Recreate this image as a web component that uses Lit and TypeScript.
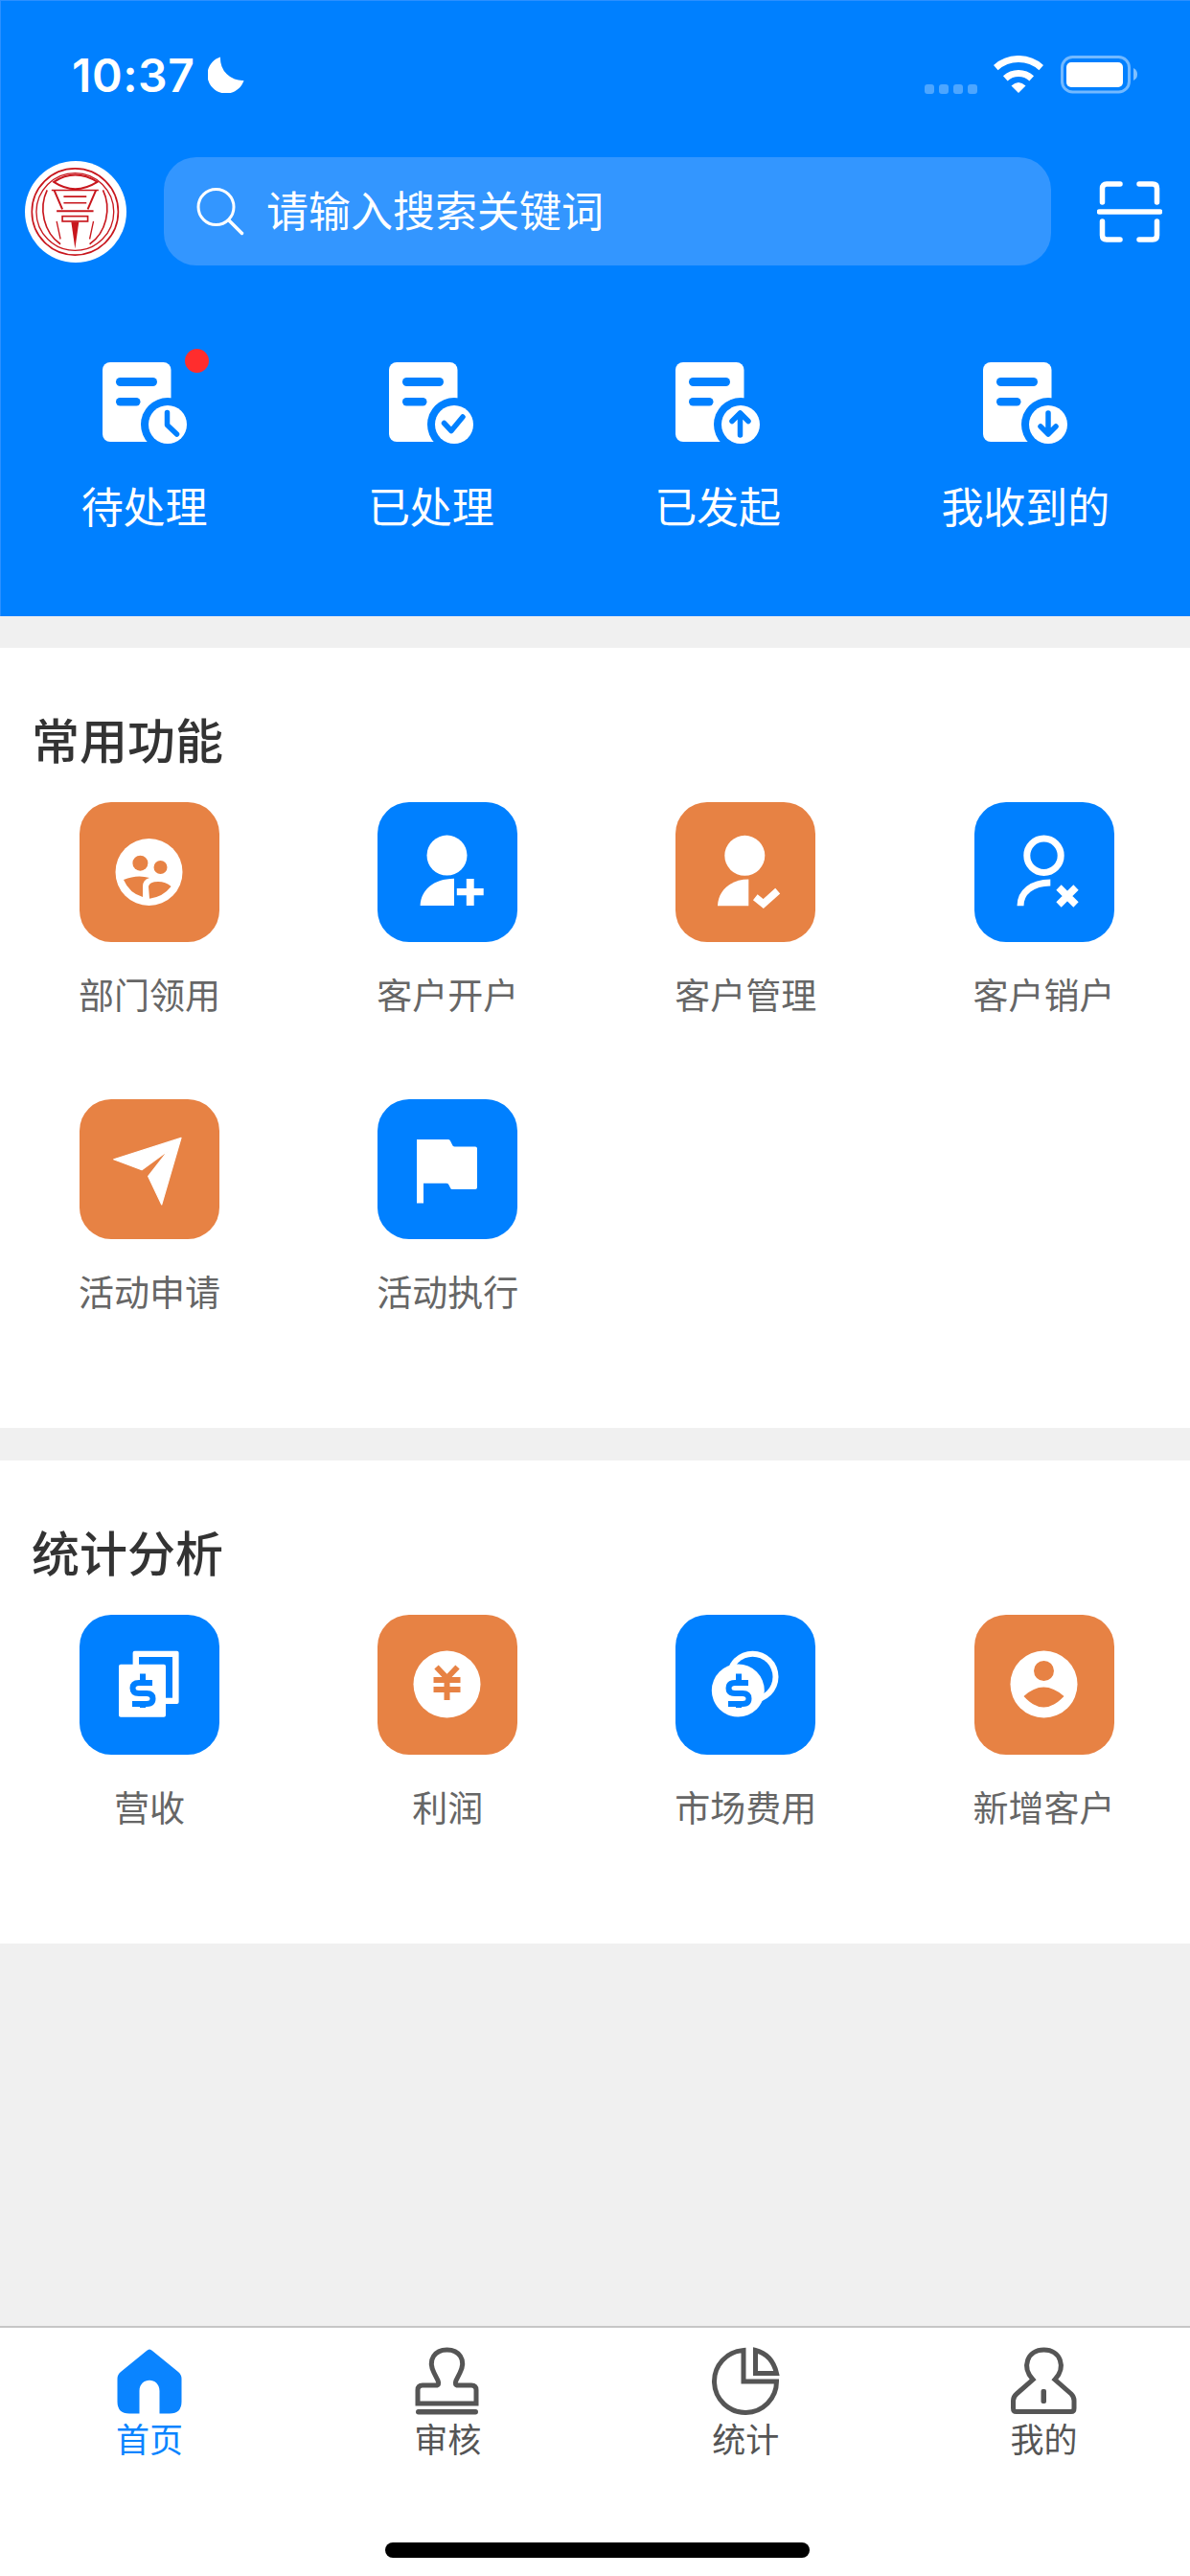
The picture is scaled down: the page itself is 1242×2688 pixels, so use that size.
import {LitElement, css, html, svg} from 'lit';
import {customElement} from 'lit/decorators.js';

const dollar = (dx: number) => svg`
  <path d="M${dx + 76} 71 H${dx + 62} Q${dx + 55.5} 71 ${dx + 55.5} 76.5 Q${dx + 55.5} 82 ${dx + 62} 82 H${dx + 70} Q${dx + 76.5} 82 ${dx + 76.5} 87.5 Q${dx + 76.5} 93 ${dx + 70} 93 H${dx + 55}" fill="none" stroke="#0080ff" stroke-width="6"/>
  <path d="M${dx + 66} 61.5 V70 M${dx + 66} 92 V97" fill="none" stroke="#0080ff" stroke-width="6"/>`;

const tileIcons: Record<string, unknown> = {
  dept: svg`
    <circle cx="72.5" cy="73" r="35" fill="#fff"/>
    <circle cx="63.4" cy="63.7" r="8" fill="#e78244"/>
    <circle cx="84.5" cy="68" r="7" fill="#e78244"/>
    <path d="M46 81 Q60 75 73 79 Q66 81 66 88 V99 Q52 95 46 81Z M72 88 Q73 83 82 83 Q90 83 95.6 88 Q87 99 73 100.7Z" fill="#e78244"/>`,
  open: svg`
    <circle cx="72.5" cy="55.6" r="21" fill="#fff"/>
    <path d="M44.6 108 C45 92 58 80 80 79.7 V108Z" fill="#fff"/>
    <path d="M82.8 90 H92.8 V80 H100.7 V90 H110.7 V97.3 H100.7 V108 H92.8 V97.3 H82.8Z" fill="#fff"/>`,
  manage: svg`
    <circle cx="72.3" cy="55.8" r="21" fill="#fff"/>
    <path d="M44 108.3 C44.5 92 58 80.6 76.3 80.6 V108.3Z" fill="#fff"/>
    <path d="M83.3 99.3 L91.7 106 L106.7 92.6" fill="none" stroke="#fff" stroke-width="7.5"/>`,
  cancel: svg`
    <circle cx="72.5" cy="55.8" r="17.7" fill="none" stroke="#fff" stroke-width="7"/>
    <path d="M48 108.3 C48 94 60 84 79.3 84" fill="none" stroke="#fff" stroke-width="7"/>
    <path d="M88 89 L106 107 M106 89 L88 107" fill="none" stroke="#fff" stroke-width="7.5"/>`,
  plane: svg`
    <path d="M106 40.4 L35.7 62.7 L65 73.7 L92.7 53.4 L71.7 80.4 L85.7 110Z" fill="#fff" stroke="#fff" stroke-width="1.2" stroke-linejoin="round"/>`,
  flag: svg`
    <path d="M41 42 H74 Q75.5 42 76 43.5 L78 47.5 Q78.5 49.4 80.5 49.4 H102 Q104 49.4 104 51.5 V92 Q104 94 102 94 H78 Q76.5 94 76 92.5 L74.5 89.5 Q74 87.7 72 87.7 H48 V108.4 H41Z" fill="#fff"/>`,
  revenue: svg`
    <rect x="55.6" y="37.7" width="48" height="55.3" rx="2" fill="#fff"/>
    <rect x="62" y="44" width="35" height="42.7" fill="#0080ff"/>
    <rect x="41" y="51.7" width="49" height="55" rx="2" fill="#fff"/>
    ${dollar(0)}`,
  profit: svg`
    <circle cx="72.5" cy="72.5" r="35" fill="#fff"/>
    <path d="M61.5 54.5 L72.5 66 L83.5 54.5 M58.5 68 H86.5 M58.5 78 H86.5 M72.5 66 V89" fill="none" stroke="#e78244" stroke-width="6"/>`,
  coins: svg`
    <circle cx="80.5" cy="64.7" r="27" fill="#fff"/>
    <circle cx="80.5" cy="64.7" r="21" fill="#0080ff"/>
    <circle cx="65.3" cy="79" r="27.5" fill="#fff"/>
    ${dollar(0)}`,
  customer: svg`
    <circle cx="72.5" cy="72.5" r="35" fill="#fff"/>
    <circle cx="72.5" cy="58.5" r="10.5" fill="#e78244"/>
    <path d="M51.5 85 Q72 66 93.5 85 Q72 108 51.5 85Z" fill="#e78244"/>`,
};

const tile = (name: string, color: string) => html`
  <div class="tile ${color}">
    <svg viewBox="0 0 146 146" width="146" height="146">${tileIcons[name]}</svg>
  </div>`;

const badges: Record<string, unknown> = {
  clock: svg`<path d="M67.5 52.5 V65.5 L77.5 75" fill="none" stroke="#0080ff" stroke-width="5.5" stroke-linecap="round" stroke-linejoin="round"/>`,
  check: svg`<path d="M57.5 63.5 L65 71.5 L77 57" fill="none" stroke="#0080ff" stroke-width="5.5" stroke-linecap="round" stroke-linejoin="round"/>`,
  up: svg`<path d="M67.5 76 V53 M59 61.5 L67.5 53 L76 61.5" fill="none" stroke="#0080ff" stroke-width="5.5" stroke-linecap="round" stroke-linejoin="round"/>`,
  down: svg`<path d="M68 53 V75 M60 67 L68 75 L76 67" fill="none" stroke="#0080ff" stroke-width="5.5" stroke-linecap="round" stroke-linejoin="round"/>`,
};

const docIcon = (badge: string) => html`
  <svg viewBox="0 0 88 85" width="88" height="85">
    <rect x="0" y="0" width="71.5" height="83" rx="8" fill="#fff"/>
    <rect x="14" y="16" width="43" height="9" rx="4.5" fill="#0080ff"/>
    <rect x="14" y="37" width="25.5" height="8.5" rx="4.2" fill="#0080ff"/>
    <circle cx="68" cy="65" r="28" fill="#0080ff"/>
    <path d="M40 85 H88 V83 H40Z" fill="#0080ff"/>
    <circle cx="68" cy="65" r="20" fill="#fff"/>
    ${badges[badge]}
  </svg>`;

const shortcuts = [
  {label: '待处理', badge: 'clock', dot: true},
  {label: '已处理', badge: 'check', dot: false},
  {label: '已发起', badge: 'up', dot: false},
  {label: '我收到的', badge: 'down', dot: false},
];

const common = [
  {label: '部门领用', icon: 'dept', color: 'orange'},
  {label: '客户开户', icon: 'open', color: 'blue'},
  {label: '客户管理', icon: 'manage', color: 'orange'},
  {label: '客户销户', icon: 'cancel', color: 'blue'},
  {label: '活动申请', icon: 'plane', color: 'orange'},
  {label: '活动执行', icon: 'flag', color: 'blue'},
];

const stats = [
  {label: '营收', icon: 'revenue', color: 'blue'},
  {label: '利润', icon: 'profit', color: 'orange'},
  {label: '市场费用', icon: 'coins', color: 'blue'},
  {label: '新增客户', icon: 'customer', color: 'orange'},
];

const tabs = [
  {
    label: '首页',
    active: true,
    icon: html`<svg viewBox="0 0 72 72" width="72" height="72">
      <path d="M36 3.5 Q37.5 3.5 39 5 L66 27 Q69.5 30 69.5 34 V58 Q69.5 70.5 57 70.5 H46.5 V47 C46.5 32 25.5 32 25.5 47 V70.5 H15 Q2.5 70.5 2.5 58 V34 Q2.5 30 6 27 L33 5 Q34.5 3.5 36 3.5Z" fill="#0a84ff"/>
    </svg>`,
  },
  {
    label: '审核',
    active: false,
    icon: html`<svg viewBox="0 0 70 72" width="70" height="72">
      <path d="M4 60 V46 Q4 41 9 41 H23 Q27 41 25 36 L21 28 C14 14 22 4 34.5 4 C47 4 55 14 48 28 L44 36 Q42 41 46 41 H60 Q65 41 65 46 V60Z" fill="none" stroke="#555" stroke-width="5"/>
      <rect x="2" y="66" width="65" height="5.5" rx="2.7" fill="#555"/>
    </svg>`,
  },
  {
    label: '统计',
    active: false,
    icon: html`<svg viewBox="0 0 74 72" width="74" height="72">
      <path d="M35 4.5 A32.5 32.5 0 1 0 69.5 37 H35Z" fill="none" stroke="#555" stroke-width="5"/>
      <path d="M47.5 4.5 Q65 9 69.5 28.5 H47.5Z" fill="none" stroke="#555" stroke-width="5"/>
    </svg>`,
  },
  {
    label: '我的',
    active: false,
    icon: html`<svg viewBox="0 0 72 72" width="72" height="72">
      <path d="M24 35 C12 22 18 4 35.5 4 C53 4 59 22 47 35 L64 50 Q67 53 67 57 V65 Q67 68.5 64 68.5 H6.5 Q3.5 68.5 3.5 65 V57 Q3.5 53 7 50Z" fill="none" stroke="#555" stroke-width="5"/>
      <rect x="32.5" y="45" width="5.5" height="15" rx="2" fill="#555"/>
    </svg>`,
  },
];

@customElement('app-root')
export class AppRoot extends LitElement {
  static styles = css`
    :host {
      display: flex;
      flex-direction: column;
      width: 1242px;
      min-height: 2688px;
      background: #f0f0f0;
      font-family: 'Noto Sans CJK SC', 'Liberation Sans', sans-serif;
    }

    .header {
      height: 643px;
      box-sizing: border-box;
      background: #0080ff;
      border-top: 1px solid #2b8fff;
      border-left: 1px solid #2b8fff;
      color: #fff;
    }

    .status {
      display: flex;
      justify-content: space-between;
      align-items: center;
      height: 40px;
      margin: 57px 55px 0 74px;
    }
    .status-left, .status-right {
      display: flex;
      align-items: center;
    }
    .time {
      margin-top: 2px;
      font-family: Inter, 'Liberation Sans', sans-serif;
      font-weight: 600;
      font-size: 48px;
      line-height: 40px;
      letter-spacing: 0.6px;
    }
    .moon {
      margin-left: 14px;
    }
    .dots {
      display: flex;
      gap: 5px;
      align-self: flex-end;
      margin-right: 17px;
    }
    .dots span {
      width: 10px;
      height: 10px;
      border-radius: 3px;
      background: rgba(255, 255, 255, 0.3);
    }
    .wifi {
      margin-right: 18px;
    }

    .search-row {
      display: flex;
      align-items: center;
      height: 113px;
      margin-top: 66px;
      padding-left: 25px;
    }
    .logo {
      flex: none;
    }
    .search {
      flex: none;
      display: flex;
      align-items: center;
      width: 926px;
      height: 113px;
      box-sizing: border-box;
      margin-left: 39px;
      padding-left: 34px;
      border-radius: 34px;
      background: #3396ff;
    }
    .search-text {
      margin: 0 0 6px 23px;
      font-size: 44px;
      line-height: 60px;
    }
    .scan {
      margin-left: 48px;
    }

    .shortcuts {
      display: flex;
      justify-content: space-around;
      margin-top: 101px;
    }
    .shortcut {
      display: flex;
      flex-direction: column;
      align-items: center;
    }
    .shortcut-icon {
      position: relative;
      width: 88px;
      height: 85px;
    }
    .dot {
      position: absolute;
      left: 86px;
      top: -14px;
      width: 25px;
      height: 25px;
      border-radius: 50%;
      background: #ff2d2d;
    }
    .shortcut-label {
      margin-top: 34px;
      font-size: 44px;
      line-height: 60px;
    }

    .section {
      margin-top: 33px;
      padding: 59px 0 123px;
      background: #fff;
    }
    .section + .section {
      margin-top: 34px;
    }
    .title {
      margin: 0 0 32px 33px;
      font-size: 50px;
      font-weight: 500;
      line-height: 70px;
      color: #333;
    }
    .grid {
      display: grid;
      grid-template-columns: repeat(4, 311.2px);
      row-gap: 91px;
      margin-bottom: 1px;
      padding-left: 0.4px;
    }
    .cell {
      display: flex;
      flex-direction: column;
      align-items: center;
    }
    .tile {
      width: 146px;
      height: 146px;
      border-radius: 33px;
    }
    .tile svg {
      display: block;
    }
    .tile.orange {
      background: #e78244;
    }
    .tile.blue {
      background: #0080ff;
    }
    .cell-label {
      margin-top: 35px;
      font-size: 37px;
      line-height: 38px;
      color: #666;
    }

    .spacer {
      flex: 1;
    }

    .tabbar {
      display: flex;
      flex-direction: column;
      height: 261px;
      box-sizing: border-box;
      border-top: 2px solid #c6c6c6;
      background: #fff;
    }
    .tabs {
      display: grid;
      grid-template-columns: repeat(4, 311.2px);
      padding: 19px 0 0 0.4px;
    }
    .tab {
      display: flex;
      flex-direction: column;
      align-items: center;
      color: #555;
    }
    .tab.active {
      color: #0a84ff;
    }
    .tab svg {
      display: block;
    }
    .tab-label {
      margin-top: 1px;
      font-size: 35px;
      line-height: 46px;
    }
    .home-indicator {
      width: 443px;
      height: 16px;
      margin: auto 0 19px 402px;
      border-radius: 8px;
      background: #000;
    }
  `;

  private renderStatus() {
    return html`
      <div class="status">
        <div class="status-left">
          <span class="time">10:37</span>
          <svg class="moon" viewBox="0 0 38 38" width="38" height="38">
            <path d="M13 .5 A19.5 19.5 0 1 0 37.5 25 A23 23 0 0 1 13 .5Z" fill="#fff"/>
          </svg>
        </div>
        <div class="status-right">
          <div class="dots"><span></span><span></span><span></span><span></span></div>
          <svg class="wifi" viewBox="0 0 52 40" width="52" height="40">
            <path d="M2.25 12.6 A35.5 35.5 0 0 1 49.75 12.6 M12.3 23.8 A20.5 20.5 0 0 1 39.7 23.8" fill="none" stroke="#fff" stroke-width="7"/>
            <path d="M26 39 L18.5 31.5 Q26 24.5 33.5 31.5Z" fill="#fff"/>
          </svg>
          <svg viewBox="0 0 80 40" width="80" height="40">
            <rect x="1.5" y="1.5" width="70" height="36.5" rx="11" fill="none" stroke="#fff" stroke-opacity="0.45" stroke-width="3"/>
            <rect x="6" y="7" width="59" height="26" rx="5" fill="#fff"/>
            <path d="M76 13 Q80 15 80 19.5 Q80 24 76 26Z" fill="#fff" fill-opacity="0.5"/>
          </svg>
        </div>
      </div>
    `;
  }

  private renderLogo() {
    return html`
      <svg class="logo" viewBox="0 0 320 320" width="106" height="106">
        <circle cx="160" cy="160" r="160" fill="#fff"/>
        <g fill="none" stroke="#c8161d">
          <circle cx="158" cy="160" r="136" stroke-width="5"/>
          <circle cx="158" cy="160" r="122" stroke-width="4"/>
          <path d="M91 66 Q158 22 228 66 Q158 110 91 66Z" stroke-width="6"/>
          <path d="M84 92 H232" stroke-width="5"/>
          <path d="M92 92 L118 152 M224 92 L198 152" stroke-width="6"/>
          <path d="M122 112 H194 M122 132 H194" stroke-width="5"/>
          <path d="M100 158 H216" stroke-width="6"/>
          <rect x="118" y="174" width="80" height="16" stroke-width="5"/>
          <path d="M70 92 C42 150 60 226 112 262 M246 92 C274 150 256 226 204 262" stroke-width="5"/>
          <path d="M100 190 L112 246 M216 190 L204 246" stroke-width="4"/>
        </g>
        <path d="M146 192 H170 L158 276Z" fill="#c8161d"/>
      </svg>
    `;
  }

  private renderGrid(title: string, items: {label: string; icon: string; color: string}[]) {
    return html`
      <section class="section">
        <h2 class="title">${title}</h2>
        <div class="grid">
          ${items.map(
            (item) => html`
              <div class="cell">
                ${tile(item.icon, item.color)}
                <span class="cell-label">${item.label}</span>
              </div>
            `,
          )}
        </div>
      </section>
    `;
  }

  render() {
    return html`
      <header class="header">
        ${this.renderStatus()}
        <div class="search-row">
          ${this.renderLogo()}
          <div class="search">
            <svg viewBox="0 0 50 50" width="50" height="50">
              <circle cx="20.5" cy="20" r="18.5" fill="none" stroke="#fff" stroke-width="3"/>
              <path d="M34 34 L47.5 47.5" fill="none" stroke="#fff" stroke-width="3.5" stroke-linecap="round"/>
            </svg>
            <span class="search-text">请输入搜索关键词</span>
          </div>
          <svg class="scan" viewBox="0 0 68 64" width="68" height="64">
            <path d="M24 3 H10 Q5.5 3 5.5 7.5 V22 M44 3 H58 Q62.5 3 62.5 7.5 V22 M5.5 42 V56.5 Q5.5 61 10 61 H24 M62.5 42 V56.5 Q62.5 61 58 61 H44 M2.5 32 H65.5" fill="none" stroke="#fff" stroke-width="5.5" stroke-linecap="round"/>
          </svg>
        </div>
        <div class="shortcuts">
          ${shortcuts.map(
            (item) => html`
              <div class="shortcut">
                <div class="shortcut-icon">
                  ${docIcon(item.badge)}
                  ${item.dot ? html`<span class="dot"></span>` : ''}
                </div>
                <span class="shortcut-label">${item.label}</span>
              </div>
            `,
          )}
        </div>
      </header>

      ${this.renderGrid('常用功能', common)}
      ${this.renderGrid('统计分析', stats)}

      <div class="spacer"></div>

      <nav class="tabbar">
        <div class="tabs">
          ${tabs.map(
            (tab) => html`
              <div class="tab ${tab.active ? 'active' : ''}">
                ${tab.icon}
                <span class="tab-label">${tab.label}</span>
              </div>
            `,
          )}
        </div>
        <div class="home-indicator"></div>
      </nav>
    `;
  }
}
